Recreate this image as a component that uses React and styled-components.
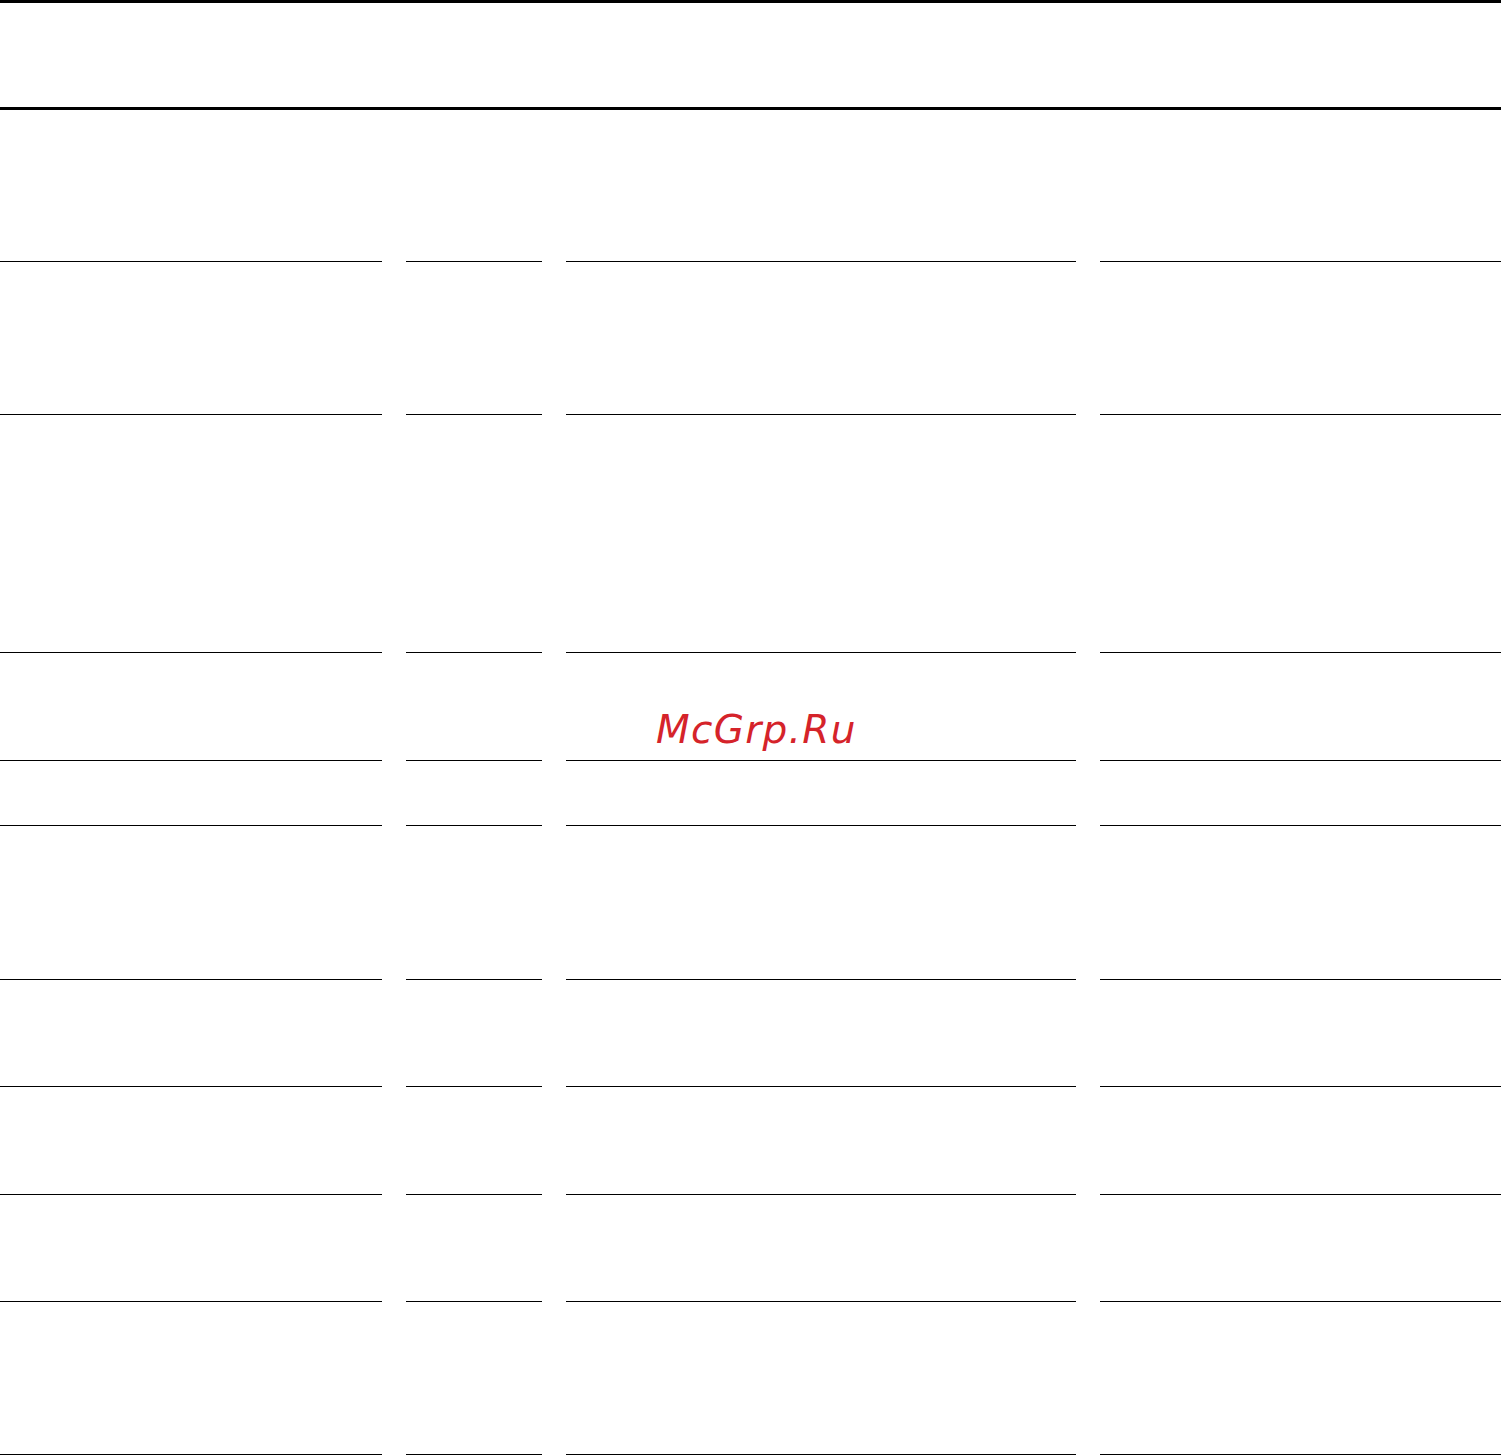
import styled, { createGlobalStyle } from 'styled-components';

const GlobalStyle = createGlobalStyle`
    html, body {
        margin: 0;
        padding: 0;
        background: #ffffff;
    }
    body {
        font-family: "DejaVu Sans", sans-serif;
    }
`;

const Page = styled.div`
    position: relative;
    width: 1501px;
    height: 1456px;
    background: #ffffff;
    overflow: hidden;
`;

const Header = styled.div`
    height: 104px;
    border-top: 3px solid #000;
    border-bottom: 3px solid #000;
`;

const Row = styled.div`
    display: grid;
    grid-template-columns: 382px 136px 510px 401px;
    column-gap: 24px;
    height: ${(props) => props.h}px;
`;

const Cell = styled.div`
    border-bottom: 1px solid #000;
`;

// red site stamp lying over the table
const Watermark = styled.div`
    position: absolute;
    left: 656px;
    top: 710px;
    font-family: "DejaVu Sans", sans-serif;
    font-style: italic;
    font-size: 39px;
    line-height: 1;
    letter-spacing: 1.3px;
    color: #d5232a;
`;

const rowHeights = [152, 153, 238, 108, 65, 154, 107, 108, 107, 153];

const App = () => {
    return (
        <Page>
            <GlobalStyle />
            <Header />
            {rowHeights.map((h, i) => (
                <Row h={h} key={i}>
                    <Cell />
                    <Cell />
                    <Cell />
                    <Cell />
                </Row>
            ))}
            <Watermark>McGrp.Ru</Watermark>
        </Page>
    );
};

export default App;
